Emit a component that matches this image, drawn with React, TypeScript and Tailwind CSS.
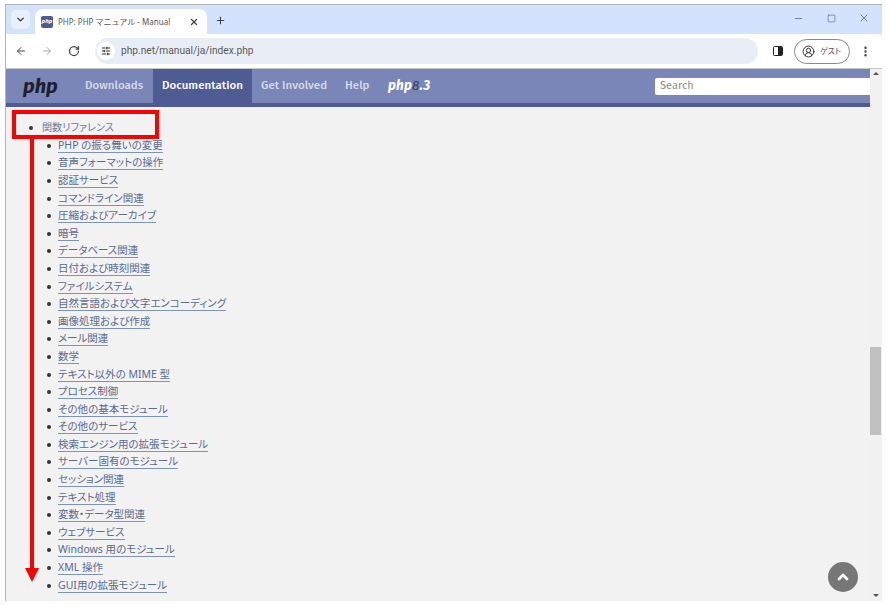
import React from "react";
import { ArrowLeft, ArrowRight, RotateCw, X, Plus, ChevronDown, Minus, Square, SlidersHorizontal, MoreVertical, CircleUserRound, ChevronUp } from "lucide-react";

const items = [
  "PHP の振る舞いの変更","音声フォーマットの操作","認証サービス","コマンドライン関連","圧縮およびアーカイブ","暗号","データベース関連","日付および時刻関連","ファイルシステム","自然言語および文字エンコーディング","画像処理および作成","メール関連","数学","テキスト以外の MIME 型","プロセス制御","その他の基本モジュール","その他のサービス","検索エンジン用の拡張モジュール","サーバー固有のモジュール","セッション関連","テキスト処理","変数・データ型関連","ウェブサービス","Windows 用のモジュール","XML 操作","GUI用の拡張モジュール",
];

const font = { fontFamily: '"Noto Sans","Noto Sans CJK JP",sans-serif' };

export default function App() {
  return (
    <div className="w-[886px] h-[605px] bg-white overflow-hidden pl-[5px] pt-[4px]" style={font}>
      <div className="relative w-[877px] h-[597px] flex flex-col border-t border-l border-[#b4b4b4] bg-[#f2f2f2]">
        {/* tab strip */}
        <div className="h-[29px] shrink-0 bg-[#d3e3fd] flex items-end pl-[5px]">
          <div className="w-[19px] h-[19px] mb-[5px] rounded-[5px] bg-[#e8f0fe] flex items-center justify-center">
            <ChevronDown size={11} strokeWidth={3} className="text-[#333]" />
          </div>
          <div className="ml-[5px] w-[172px] h-[25px] bg-white rounded-t-[8px] flex items-center pl-[6px] pr-[8px]">
            <div className="w-[12px] h-[12px] rounded-[2px] bg-[#4f5b93] text-white text-[6px] font-bold italic flex items-center justify-center">php</div>
            <span className="ml-[5px] text-[8px] text-[#555] whitespace-nowrap">PHP: PHP マニュアル - Manual</span>
            <X size={10} strokeWidth={3} className="ml-auto text-[#444]" />
          </div>
          <Plus size={11} strokeWidth={2.5} className="ml-[8px] mb-[8px] text-[#444]" />
          <div className="ml-auto flex items-center gap-[22px] pr-[12px] mb-[10px] text-[#555]">
            <Minus size={11} strokeWidth={1.5} />
            <Square size={9} strokeWidth={1.5} className="ml-[1px]" />
            <X size={12} strokeWidth={1.5} />
          </div>
        </div>
        {/* toolbar */}
        <div className="h-[35px] shrink-0 bg-white rounded-tr-[6px] flex items-center pl-[9px] pr-[9px] border-b border-[#c8c8c8]">
          <ArrowLeft size={12} strokeWidth={2} className="text-[#444]" />
          <ArrowRight size={12} strokeWidth={2} className="ml-[14px] text-[#aaa]" />
          <RotateCw size={12} strokeWidth={2.5} className="ml-[15px] text-[#444]" />
          <div className="ml-[15px] w-[663px] h-[26px] rounded-full bg-[#e9eef6] flex items-center pl-[2px]">
            <div className="w-[18px] h-[18px] rounded-full bg-white flex items-center justify-center">
              <SlidersHorizontal size={10} strokeWidth={2.5} className="text-[#333]" />
            </div>
            <span className="ml-[6px] text-[10.2px] text-[#5a5a5a]" style={{ fontFamily: '"Roboto",sans-serif' }}>php.net/manual/ja/index.php</span>
          </div>
          <div className="ml-[15px] w-[10px] h-[10px] border border-[#222] rounded-[1.5px] flex justify-end">
            <div className="w-[4px] h-full bg-[#222]" />
          </div>
          <div className="ml-[11px] w-[56px] h-[25px] rounded-full border border-[#8a8a8a] flex items-center pl-[7px]">
            <CircleUserRound size={13} strokeWidth={1.8} className="text-[#333]" />
            <span className="ml-[5px] text-[8px] text-[#555] [font-feature-settings:'palt']">ゲスト</span>
          </div>
          <MoreVertical size={13} strokeWidth={2.5} className="ml-[9px] text-[#444]" />
        </div>
        {/* page */}
        <div className="flex-1 flex min-h-0">
          <div className="flex-1 min-w-0">
            <div className="h-[38px] bg-[#7a86b8] border-b-[4px] border-[#4f5b93] flex items-stretch text-[11.5px] font-medium tracking-[0.05px] text-[#d6d9e8]" style={{ fontFamily: '"Fira Sans","Noto Sans",sans-serif' }}>
              <div className="w-[79px] flex items-center pl-[17px]">
                <span className="text-[20px] leading-none font-bold italic text-[#1f1f2e]">php</span>
              </div>
              <div className="w-[68px] flex items-center whitespace-nowrap">Downloads</div>
              <div className="w-[99px] bg-[#4f5b93] flex items-center justify-center text-white whitespace-nowrap">Documentation</div>
              <div className="ml-[9px] w-[84px] flex items-center whitespace-nowrap">Get Involved</div>
              <div className="w-[43px] flex items-center">Help</div>
              <div className="flex items-center font-bold italic text-white text-[13.5px] tracking-[0.2px]">php<span className="font-normal text-[#3a4060]">8</span>.3</div>
              <div className="ml-auto flex items-center">
                <div className="w-[215px] h-[17px] bg-white rounded-l-[2px] flex items-center pl-[5px] text-[11px] font-normal text-[#8c8c8c]">Search</div>
              </div>
            </div>
            <ul className="pt-[12px] pl-[23px] text-[#5a6b8e] text-[10.5px] [font-feature-settings:'palt']">
              <li className="h-[18px] flex items-center">
                <span className="w-[4px] h-[4px] rounded-full bg-[#333] shrink-0" />
                <span className="ml-[9px] text-[10.1px] text-[#6d7a9c] whitespace-nowrap">関数リファレンス</span>
              </li>
              <ul className="pl-[18px]">
                {items.map((t) => (
                  <li key={t} className="h-[17.6px] flex items-center">
                    <span className="w-[4px] h-[4px] rounded-full bg-[#333] shrink-0" />
                    <span className="ml-[7px] leading-[13px] border-b border-[#7f93b8] whitespace-nowrap">{t}</span>
                  </li>
                ))}
              </ul>
            </ul>
          </div>
          {/* scrollbar */}
          <div className="w-[12px] shrink-0 bg-[#f1f1f1] flex flex-col items-center justify-between pt-[3px] pb-[4px] relative">
            <div className="w-0 h-0 border-x-[3px] border-x-transparent border-b-[3px] border-b-[#555]" />
            <div className="flex-1 w-full pt-[272px]">
              <div className="h-[88px] w-[11px] bg-[#c0c0c0]" />
            </div>
            <div className="w-0 h-0 border-x-[3px] border-x-transparent border-t-[3px] border-t-[#555]" />
          </div>
        </div>
        {/* annotation: red box */}
        <div className="absolute left-[6px] top-[105px] w-[147px] h-[29px] border-[4px] border-[#ff0000]" />
        {/* annotation: red arrow */}
        <div className="absolute left-[24px] top-[134px] w-[4px] h-[430px] bg-[#ff0000]" />
        <div className="absolute left-[19px] top-[563px] w-0 h-0 border-x-[7px] border-x-transparent border-t-[14px] border-t-[#ff0000]" />
        {/* back to top */}
        <div className="absolute left-[822px] top-[557px] w-[30px] h-[30px] rounded-full bg-[#777] flex items-center justify-center">
          <ChevronUp size={16} strokeWidth={4} className="text-white" />
        </div>
      </div>
    </div>
  );
}
